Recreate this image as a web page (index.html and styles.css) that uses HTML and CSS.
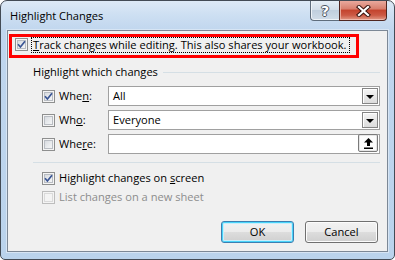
FILE: index.html
```html
<!DOCTYPE html>
<html lang="en">
<head>
    <meta charset="UTF-8">
    <title>Highlight Changes</title>
    <link rel="stylesheet" href="styles.css">
</head>
<body>
    <div class="window">
        <div class="titlebar">
            <span class="title">Highlight Changes</span>
            <div class="caption-buttons">
                <div class="cap-btn help">?</div>
                <div class="cap-btn close">
                    <svg width="15" height="12" viewBox="0 0 15 12">
                        <path d="M3 2 L12 10 M12 2 L3 10" stroke="#3b1510" stroke-width="4.2" stroke-linecap="square" fill="none"/>
                        <path d="M3 2 L12 10 M12 2 L3 10" stroke="#fff" stroke-width="2.2" stroke-linecap="square" fill="none"/>
                    </svg>
                </div>
            </div>
        </div>

        <div class="client">
            <div class="track-box">
                <span class="check">
                    <svg width="11" height="11" viewBox="0 0 11 11"><path d="M2 5.3 L4.4 8 L9 2.3" stroke="#3a5594" stroke-width="1.7" fill="none"/></svg>
                </span>
                <span class="focus-text"><u>T</u>rack changes while editing. This also shares your workbook.</span>
            </div>

            <div class="group-title">
                <span>Highlight which changes</span>
                <span class="rule"></span>
            </div>

            <div class="field-rows">
                <div class="field-row">
                    <span class="check">
                        <svg width="11" height="11" viewBox="0 0 11 11"><path d="M2 5.3 L4.4 8 L9 2.3" stroke="#3a5594" stroke-width="1.7" fill="none"/></svg>
                    </span>
                    <span class="field-label">Whe<u>n</u>:</span>
                    <div class="combo">
                        <span class="combo-text">All</span>
                        <span class="drop-btn"><span class="arrow-down"></span></span>
                    </div>
                </div>
                <div class="field-row">
                    <span class="check"></span>
                    <span class="field-label">Wh<u>o</u>:</span>
                    <div class="combo">
                        <span class="combo-text">Everyone</span>
                        <span class="drop-btn"><span class="arrow-down"></span></span>
                    </div>
                </div>
                <div class="field-row">
                    <span class="check"></span>
                    <span class="field-label">Whe<u>r</u>e:</span>
                    <div class="combo">
                        <span class="combo-text"></span>
                        <span class="ref-btn">
                            <svg width="9" height="11" viewBox="0 0 9 11">
                                <path d="M0 4.5 L4.5 0 L9 4.5 Z" fill="#000"/>
                                <rect x="3" y="4" width="3" height="4" fill="#000"/>
                                <rect x="0" y="9.5" width="9" height="1.5" fill="#000"/>
                            </svg>
                        </span>
                    </div>
                </div>
            </div>

            <div class="separator"></div>

            <div class="option-row">
                <span class="check">
                    <svg width="11" height="11" viewBox="0 0 11 11"><path d="M2 5.3 L4.4 8 L9 2.3" stroke="#3a5594" stroke-width="1.7" fill="none"/></svg>
                </span>
                <span class="option-label">Highlight changes on <u>s</u>creen</span>
            </div>
            <div class="option-row disabled">
                <span class="check"></span>
                <span class="option-label">List changes on a new sheet</span>
            </div>

            <div class="buttons">
                <div class="btn default">OK</div>
                <div class="btn">Cancel</div>
            </div>
        </div>
    </div>
</body>
</html>
```

FILE: styles.css
```css
body {
    margin: 0;
    font-family: "Open Sans", "Liberation Sans", sans-serif;
    font-size: 11.1px;
    color: #000;
    background: #fff;
}

.window {
    width: 395px;
    height: 260px;
    box-sizing: border-box;
    border: 1px solid #434b55;
    border-radius: 7px 7px 5px 5px;
    background: linear-gradient(to bottom, #dde9f6 0, #cddff2 14px, #c0d6ee 30px, #bad3ec 100%);
    display: flex;
    flex-direction: column;
    overflow: hidden;
}

.titlebar {
    height: 29px;
    flex: none;
    display: flex;
    justify-content: space-between;
    align-items: flex-start;
}

.title {
    margin: 7px 0 0 9px;
    line-height: 16px;
}

.caption-buttons {
    display: flex;
    margin-right: 7px;
}

.cap-btn {
    height: 20px;
    box-sizing: border-box;
    border: 1px solid #5f6d7c;
    border-top: none;
    display: flex;
    align-items: center;
    justify-content: center;
}

.help {
    width: 29px;
    border-right: none;
    border-radius: 0 0 0 4px;
    background: linear-gradient(to bottom, #e6eef6 0, #d3dee9 45%, #c0cfde 50%, #d0dce8 100%);
    box-shadow: inset 0 -1px 0 #eef3f8, inset 1px 0 0 #eef3f8;
    color: #fff;
    font-family: "DejaVu Sans", sans-serif;
    font-weight: bold;
    font-size: 14px;
    text-shadow: 1px 0 #4a5561, -1px 0 #4a5561, 0 1px #4a5561, 0 -1px #4a5561;
}

.close {
    width: 48px;
    border-color: #4f2620;
    border-radius: 0 0 4px 0;
    background: linear-gradient(to bottom, #e9a99d 0, #d8806f 40%, #c4452f 50%, #cc5a45 75%, #e19a86 100%);
    box-shadow: inset 0 -1px 0 #f0b8ac, inset 1px 0 0 #e8a89a;
}

.client {
    margin: 0 6px;
    height: 222px;
    box-sizing: border-box;
    border: 1px solid #7c8896;
    background: #f0f0f0;
    box-shadow: 0 0 0 1px #d7e5f4;
}

.track-box {
    margin: 3px 0 0 1px;
    width: 350px;
    height: 24px;
    box-sizing: border-box;
    border: 3px solid #ff0000;
    padding-left: 3px;
    display: flex;
    align-items: flex-start;
}

.track-box .check {
    margin-top: 1px;
}

.focus-text {
    margin-left: 3px;
    border: 1px dotted #000;
    padding: 0 2px 0 1px;
    line-height: 14px;
    white-space: nowrap;
}

.check {
    flex: none;
    width: 13px;
    height: 13px;
    box-sizing: border-box;
    border: 1px solid #8e8f8f;
    background: linear-gradient(135deg, #cfd3d9 0, #eceef0 60%, #f8f8f8 100%);
    box-shadow: inset 0 0 0 1px #f4f4f4, inset 0 0 0 2px #b9bdc3;
    display: flex;
}

.check svg {
    display: block;
}

.group-title {
    margin: 6px 7px 0 25px;
    display: flex;
    align-items: center;
    line-height: 16px;
}

.rule {
    flex: 1;
    height: 1px;
    margin-left: 5px;
    background: #d5dfe5;
}

.field-rows {
    margin-top: 6px;
    display: flex;
    flex-direction: column;
    gap: 4px;
}

.field-row {
    height: 20px;
    margin-right: 7px;
    padding-left: 34px;
    display: flex;
    align-items: flex-start;
}

.field-row .check {
    margin-top: 4px;
}

.field-label {
    flex: none;
    width: 49px;
    margin-left: 4px;
    line-height: 19px;
}

.combo {
    flex: 1;
    height: 20px;
    box-sizing: border-box;
    border: 1px solid #a0a0a0;
    background: #fff;
    display: flex;
    align-items: flex-start;
}

.combo-text {
    flex: 1;
    padding-left: 4px;
    line-height: 18px;
}

.drop-btn {
    width: 16px;
    height: 16px;
    margin: 1px 1px 0 0;
    box-sizing: border-box;
    border: 1px solid #858585;
    background: linear-gradient(to bottom, #f4f4f4, #dcdcdc);
    box-shadow: inset 1px 1px 0 #fff;
    display: flex;
    align-items: center;
    justify-content: center;
}

.arrow-down {
    width: 0;
    height: 0;
    border-left: 4px solid transparent;
    border-right: 4px solid transparent;
    border-top: 4px solid #000;
    margin-top: 1px;
}

.ref-btn {
    width: 20px;
    height: 18px;
    box-sizing: border-box;
    margin-top: -1px;
    margin-right: 1px;
    border: 1px solid #7a7a7a;
    border-radius: 2px;
    background: #fcfcfc;
    box-shadow: inset 0 0 0 1px #e6e6e6;
    display: flex;
    align-items: center;
    justify-content: center;
}

.separator {
    height: 1px;
    margin: 8px 7px 0 25px;
    background: #d5dfe5;
}

.option-row {
    height: 19px;
    padding-left: 34px;
    display: flex;
    align-items: flex-start;
}

.separator + .option-row {
    margin-top: 5px;
}

.option-row .check {
    margin-top: 4px;
}

.option-label {
    margin-left: 4px;
    line-height: 19px;
}

.option-row.disabled .check {
    border-color: #bdbdbd;
    background: #f4f4f4;
    box-shadow: inset 0 0 0 1px #f4f4f4, inset 0 0 0 2px #dadada;
}

.option-row.disabled .option-label {
    color: #8d8d8d;
}

.buttons {
    margin: 15px 9px 0 0;
    display: flex;
    justify-content: flex-end;
    gap: 11px;
}

.btn {
    width: 73px;
    height: 22px;
    box-sizing: border-box;
    border: 1px solid #707070;
    border-radius: 3px;
    background: linear-gradient(to bottom, #f2f2f2 0, #ebebeb 50%, #dddddd 51%, #cfcfcf 100%);
    box-shadow: inset 0 0 0 1px #fcfcfc;
    text-align: center;
    line-height: 20px;
}

.btn.default {
    border-color: #3c7fb1;
    box-shadow: inset 0 0 0 1px #48d4fa, inset 0 0 0 2px #c8eefb;
}
```
